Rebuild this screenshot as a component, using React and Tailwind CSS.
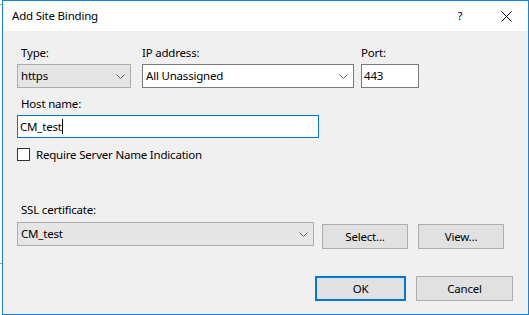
import React from "react";

const font = { fontFamily: '"Noto Sans", "Segoe UI", sans-serif' };

function Chevron() {
  return (
    <svg width="9" height="5" viewBox="0 0 9 5" className="block">
      <path d="M0.5 0.5 L4.5 4.5 L8.5 0.5" fill="none" stroke="#606060" strokeWidth="1" />
    </svg>
  );
}

export default function App() {
  return (
    <div className="w-[529px] h-[315px] bg-white flex text-[11.5px] leading-[16px] tracking-[-0.2px] text-black overflow-hidden" style={font}>
      <div className="w-[2px] flex flex-col">
        <div className="mt-[4px] h-px bg-[#a0a0a0]" />
        <div className="mt-[258px] h-px bg-[#a0a0a0]" />
      </div>
      <div className="w-[527px] h-[315px] border border-[#1883d7] flex flex-col">
        {/* Title bar */}
        <div className="h-[30px] bg-white flex items-center pl-[9px] shrink-0">
          <span className="flex-1">Add Site Binding</span>
          <span className="w-[10px] text-center mr-[36px]">?</span>
          <svg width="11" height="11" viewBox="0 0 11 11" className="mr-[16px]">
            <path d="M0.5 0.5 L10.5 10.5 M10.5 0.5 L0.5 10.5" stroke="#000" strokeWidth="1" />
          </svg>
        </div>
        {/* Content */}
        <div className="flex-1 bg-[#f0f0f0] pl-[14px] pr-[15px] pt-[14px] flex flex-col">
          {/* Row 1 */}
          <div className="flex">
            <div className="flex flex-col w-[114px]">
              <span className="pl-[4px]">Type:</span>
              <div className="mt-[3px] h-[24px] bg-[#e5e5e5] border border-[#adadad] flex items-center pl-[3px] pr-[5px]">
                <span className="flex-1">https</span>
                <Chevron />
              </div>
            </div>
            <div className="flex flex-col w-[212px] ml-[11px]">
              <span>IP address:</span>
              <div className="mt-[3px] h-[24px] bg-white border border-[#7a7a7a] flex items-center pl-[3px] pr-[5px]">
                <span className="flex-1">All Unassigned</span>
                <Chevron />
              </div>
            </div>
            <div className="flex flex-col w-[58px] ml-[7px]">
              <span>Port:</span>
              <div className="mt-[3px] h-[24px] bg-white border border-[#7a7a7a] flex items-center pl-[2px]">
                <span>443</span>
              </div>
            </div>
          </div>
          {/* Host name */}
          <span className="pl-[4px] mt-[8px]">Host name:</span>
          <div className="mt-[3px] w-[302px] h-[23px] bg-white border border-[#0078d7] flex items-center pl-[2px]">
            <span>CM_test</span>
            <span className="w-px h-[15px] bg-black" />
          </div>
          {/* Checkbox */}
          <div className="mt-[10px] flex items-center h-[13px]">
            <div className="w-[13px] h-[13px] bg-white border border-[#333333]" />
            <span className="ml-[6px]">Require Server Name Indication</span>
          </div>
          {/* SSL */}
          <span className="pl-[4px] mt-[41px]">SSL certificate:</span>
          <div className="mt-[4px] flex items-start">
            <div className="w-[297px] h-[24px] bg-[#e5e5e5] border border-[#adadad] flex items-center pl-[3px] pr-[5px]">
              <span className="flex-1">CM_test</span>
              <Chevron />
            </div>
            <button className="ml-[8px] mt-[2px] w-[86px] h-[25px] bg-[#e1e1e1] border border-[#adadad] flex items-center justify-center">
              Select...
            </button>
            <button className="ml-[10px] mt-[2px] w-[86px] h-[25px] bg-[#e1e1e1] border border-[#adadad] flex items-center justify-center">
              View...
            </button>
          </div>
          {/* Bottom buttons */}
          <div className="mt-[27px] flex justify-end">
            <button className="w-[91px] h-[25px] bg-[#e1e1e1] border-2 border-[#0078d7] flex items-center justify-center">
              OK
            </button>
            <button className="ml-[10px] w-[97px] h-[25px] bg-[#e1e1e1] border border-[#adadad] flex items-center justify-center">
              Cancel
            </button>
          </div>
        </div>
      </div>
    </div>
  );
}
